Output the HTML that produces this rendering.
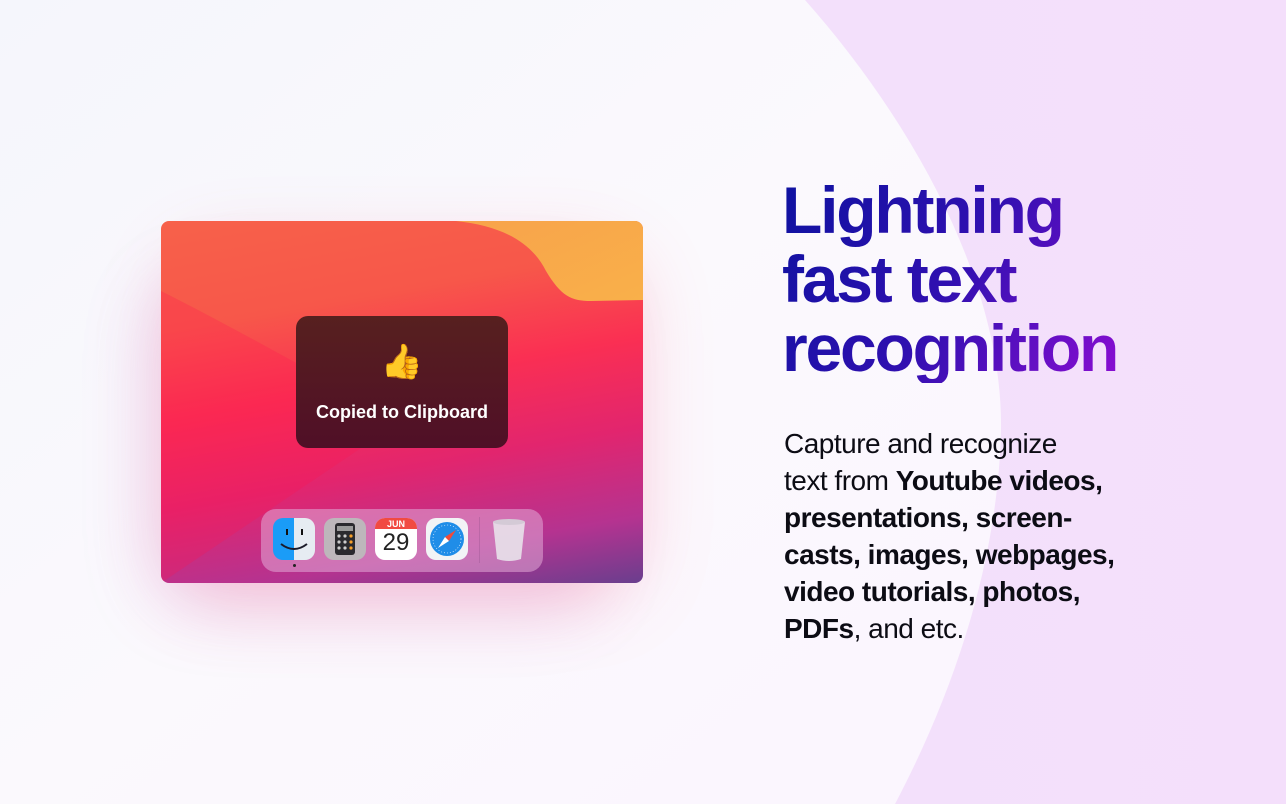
<!DOCTYPE html>
<html><head><style>
html,body{margin:0;padding:0;width:1286px;height:804px;overflow:hidden}
body{position:relative;background:#f1e1fb;font-family:"Liberation Sans",sans-serif}
.bg{position:absolute;left:0;top:0}
.glow{position:absolute;left:190px;top:250px;width:430px;height:310px;border-radius:40px;box-shadow:0 20px 70px 20px rgba(255,90,120,.25),-30px 40px 70px 10px rgba(190,90,200,.18)}
.win{position:absolute;left:161px;top:221px;width:482px;height:362px;border-radius:8px;overflow:hidden;
background:linear-gradient(170deg,#f7614a 0%,#f7574a 25%,#fa2f53 45%,#e2256e 65%,#b53390 85%,#6a3e8e 100%)}
.toast{position:absolute;left:135px;top:95px;width:212px;height:132px;border-radius:12px;background:linear-gradient(180deg,#57201f,#500f27);color:#fff;text-align:center}
.toast .e{font-size:34px;margin-top:24px;line-height:44px}
.toast .t{font-weight:bold;font-size:18px;margin-top:18px}
.dock{position:absolute;left:100px;top:288px;width:282px;height:63px;border-radius:15px;background:rgba(225,170,215,.55)}
.ic{position:absolute;top:9px;width:42px;height:42px;border-radius:10px}
h1{position:absolute;left:782px;top:176px;margin:0;font-size:66px;line-height:69px;letter-spacing:-2.2px;font-weight:bold;
background:linear-gradient(120deg,#0e12a0 0%,#3010b0 50%,#8a0ed2 100%);-webkit-background-clip:text;background-clip:text;color:transparent}
p{position:absolute;left:784px;top:425px;margin:0;font-size:28px;line-height:37px;color:#0c0c14;white-space:nowrap;letter-spacing:-0.5px}
</style></head><body>
<svg class="bg" width="1286" height="804">
 <defs>
  <linearGradient id="r" x1="0" y1="0" x2="1" y2="0"><stop offset="0" stop-color="#f1e3fb"/><stop offset="1" stop-color="#f4dffb"/></linearGradient>
  <linearGradient id="w" x1="0" y1="0" x2="1" y2="1"><stop offset="0" stop-color="#f5f6fc"/><stop offset=".5" stop-color="#fbf9fd"/><stop offset="1" stop-color="#fbf5fe"/></linearGradient>
 </defs>
 <rect width="1286" height="804" fill="url(#r)"/>
 <path d="M0,0 L805,0 C920,130 1003,290 1001,430 C998,560 955,690 895,804 L0,804Z" fill="url(#w)"/>
</svg>
<div class="glow"></div>
<div class="win">
 <svg style="position:absolute;left:0;top:0" width="482" height="362">
  <defs><linearGradient id="y" x1="0" y1="0" x2="1" y2="1"><stop offset="0" stop-color="#f8a34b"/><stop offset="1" stop-color="#f9b04a"/></linearGradient></defs>
  <path d="M295,0 C340,5 370,20 385,50 C400,75 410,80 430,80 L482,79 L482,0Z" fill="url(#y)"/>
  <path d="M0,70 C60,100 150,150 240,200 L0,362Z" fill="rgba(255,20,80,.25)"/>
 </svg>
 <div class="toast"><div class="e">👍</div><div class="t">Copied to Clipboard</div></div>
 <div class="dock">
  <div class="ic" style="left:12px;background:linear-gradient(90deg,#1a9cf7 50%,#e6ecf2 50%);overflow:hidden">
   <svg width="42" height="42"><path d="M8,26 Q21,36 34,26" stroke="#1b1b2a" stroke-width="2" fill="none"/><rect x="13" y="11" width="2" height="6" fill="#111"/><rect x="28" y="11" width="2" height="6" fill="#111"/></svg></div>
  <div style="position:absolute;left:32px;top:55px;width:3px;height:3px;border-radius:50%;background:#222"></div>
  <div class="ic" style="left:63px;background:#bdb7bb">
   <div style="position:absolute;left:11px;top:5px;width:20px;height:32px;background:#2a2a2e;border-radius:3px"></div>
   <svg style="position:absolute;left:0;top:0" width="42" height="42"><rect x="13" y="8" width="16" height="5" fill="#9a9a9a"/>
   <g fill="#ccc"><circle cx="15" cy="18" r="1.6"/><circle cx="21" cy="18" r="1.6"/><circle cx="15" cy="24" r="1.6"/><circle cx="21" cy="24" r="1.6"/><circle cx="15" cy="30" r="1.6"/><circle cx="21" cy="30" r="1.6"/></g>
   <g fill="#f7a02a"><circle cx="27" cy="18" r="1.6"/><circle cx="27" cy="24" r="1.6"/><circle cx="27" cy="30" r="1.6"/></g></svg></div>
  <div class="ic" style="left:114px;background:#fff;overflow:hidden">
   <div style="height:11px;background:#f14a42;color:#fff;font-size:9px;font-weight:bold;text-align:center;line-height:12px">JUN</div>
   <div style="text-align:center;font-size:24px;line-height:28px;color:#222">29</div></div>
  <div class="ic" style="left:165px;background:#f2f4f6">
   <svg width="42" height="42"><circle cx="21" cy="21" r="17" fill="#1f8de8"/><circle cx="21" cy="21" r="14" fill="none" stroke="#fff" stroke-width=".6" stroke-dasharray="1 2"/><path d="M30,12 L23,23 L19,19Z" fill="#f24a3a"/><path d="M12,30 L19,19 L23,23Z" fill="#fff"/></svg></div>
  <div style="position:absolute;left:218px;top:8px;width:1px;height:46px;background:rgba(150,80,140,.35)"></div>
  <svg style="position:absolute;left:228px;top:8px" width="40" height="46"><path d="M4,5 L36,5 L32,42 Q20,46 8,42Z" fill="#e8e2ea" opacity=".9"/><ellipse cx="20" cy="5" rx="16" ry="3" fill="#d4cad6"/></svg>
 </div>
</div>
<h1>Lightning<br>fast text<br>recognition</h1>
<p>Capture and recognize<br>text from <b>Youtube videos,</b><br><b>presentations, screen-</b><br><b>casts, images, webpages,</b><br><b>video tutorials, photos,</b><br><b>PDFs</b>, and etc.</p>
</body></html>
